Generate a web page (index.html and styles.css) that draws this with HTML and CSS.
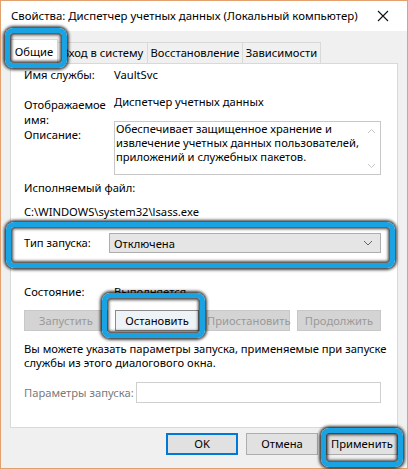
FILE: index.html
```html
<!DOCTYPE html>
<html lang="ru">
<head>
<meta charset="utf-8">
<link rel="stylesheet" href="styles.css">
</head>
<body>
<div class="window">
  <div class="titlebar">
    <span class="title">Свойства: Диспетчер учетных данных (Локальный компьютер)</span>
    <svg class="close" width="12" height="12" viewBox="0 0 12 12"><path d="M1 1L11 11M11 1L1 11" stroke="#111" stroke-width="1.1" fill="none"/></svg>
  </div>
  <div class="body">
    <div class="tabs">
      <div class="tab active">Общие</div>
      <div class="tab t2">Вход в систему</div>
      <div class="tab t3">Восстановление</div>
      <div class="tab t4">Зависимости</div>
    </div>
    <div class="panel">
      <div class="row r1"><div class="label">Имя службы:</div><div class="value">VaultSvc</div></div>
      <div class="row r2"><div class="label two">Отображаемое<br>имя:</div><div class="value">Диспетчер учетных данных</div></div>
      <div class="row r3">
        <div class="label pad6">Описание:</div>
        <div class="textarea">
          <div class="ta-text">Обеспечивает защищенное хранение и<br>извлечение учетных данных пользователей,<br>приложений и служебных пакетов.</div>
          <div class="ta-scroll">
            <svg width="9" height="6" viewBox="0 0 9 6"><path d="M1 5L4.5 1.5L8 5" stroke="#c4c4c4" stroke-width="1" fill="none"/></svg>
            <svg width="9" height="6" viewBox="0 0 9 6"><path d="M1 1L4.5 4.5L8 1" stroke="#c4c4c4" stroke-width="1" fill="none"/></svg>
          </div>
        </div>
      </div>
      <div class="row r4"><div class="label wide">Исполняемый файл:</div></div>
      <div class="row r5"><div class="label wide">C:\WINDOWS\system32\lsass.exe</div></div>
      <div class="row r6">
        <div class="label lh20">Тип запуска:</div>
        <div class="combo"><span>Отключена</span>
          <svg width="10" height="6" viewBox="0 0 10 6"><path d="M1 1L5 5L9 1" stroke="#666" stroke-width="1" fill="none"/></svg>
        </div>
      </div>
      <div class="row r7"><div class="label">Состояние:</div><div class="value">Выполняется</div></div>
      <div class="row r8 btnrow">
        <div class="btn disabled">Запустить</div>
        <div class="btn focus">Остановить</div>
        <div class="btn disabled">Приостановить</div>
        <div class="btn disabled">Продолжить</div>
      </div>
      <div class="row r9 note">Вы можете указать параметры запуска, применяемые при запуске<br>службы из этого диалогового окна.</div>
      <div class="row r10">
        <div class="label lh21 muted plabel">Параметры запуска:</div>
        <div class="input"></div>
      </div>
    </div>
    <div class="footer">
      <div class="btn fbtn default">OK</div>
      <div class="btn fbtn">Отмена</div>
      <div class="btn fbtn">Применить</div>
    </div>
  </div>
  <div class="hl hl-tab"></div>
  <div class="hl hl-type"></div>
  <div class="hl hl-stop"></div>
  <div class="hl hl-apply"></div>
</div>
</body>
</html>
```
FILE: styles.css
```css
* { box-sizing: border-box; }
html, body { margin: 0; padding: 0; }
body {
  width: 408px;
  height: 469px;
  overflow: hidden;
  font-family: "Noto Sans", "Liberation Sans", sans-serif;
  font-size: 11.2px;
  color: #000;
  background: #fff;
}
.window {
  position: relative;
  width: 408px;
  height: 469px;
  border: 1px solid #e3a06f;
  background: #f0f0f0;
  display: flex;
  flex-direction: column;
}
.titlebar {
  height: 30px;
  background: #fff;
  display: flex;
  align-items: center;
  justify-content: space-between;
  padding: 0 18px 0 10px;
}
.title { font-size: 11.4px; line-height: 30px; white-space: nowrap; }
.close { display: block; }
.body {
  flex: 1;
  padding: 0 9px;
  display: flex;
  flex-direction: column;
}
.tabs {
  height: 32px;
  display: flex;
  align-items: flex-end;
  position: relative;
  z-index: 2;
}
.tab {
  height: 21px;
  line-height: 19px;
  border: 1px solid #d9d9d9;
  border-bottom: none;
  background: #f0f0f0;
  text-align: center;
  white-space: nowrap;
  margin-left: -1px;
}
.tab.active {
  height: 25px;
  line-height: 24px;
  width: 48px;
  background: #fff;
  margin-left: 0;
  margin-bottom: -1px;
  padding-bottom: 1px;
}
.t2 { width: 91px; }
.t3 { width: 96px; }
.t4 { width: 79px; }
.panel {
  height: 365px;
  background: #fff;
  border: 1px solid #d9d9d9;
  padding: 0 0 0 13px;
  position: relative;
  z-index: 1;
}
.row { display: flex; }
.label { width: 90px; flex: none; line-height: 16px; white-space: nowrap; }
.label.wide { width: auto; }
.value { line-height: 16px; white-space: nowrap; }
.r1 { margin-top: 3px; height: 16px; }
.r2 { margin-top: 11px; height: 32px; }
.label.two { line-height: 15px; padding-top: 3px; }
.r3 { height: 54px; margin-top: -5px; }
.label.pad6 { padding-top: 6px; line-height: 15px; }
.textarea {
  width: 267px;
  height: 54px;
  border: 1px solid #c8c8c8;
  display: flex;
  justify-content: space-between;
}
.ta-text { line-height: 14px; padding: 0 0 0 1px; white-space: nowrap; }
.ta-scroll {
  width: 17px;
  display: flex;
  flex-direction: column;
  justify-content: space-between;
  align-items: center;
  padding: 6px 0 5px;
}
.ta-scroll svg { display: block; }
.r4 { margin-top: 5px; height: 16px; }
.r5 { margin-top: 8px; height: 16px; }
.r6 { margin-top: 13px; height: 20px; }
.lh20 { line-height: 20px; }
.combo {
  width: 272px;
  margin-left: -5px;
  height: 20px;
  background: #e5e5e5;
  border: 1px solid #adadad;
  display: flex;
  align-items: center;
  justify-content: space-between;
  padding: 0 7px 0 4px;
}
.combo svg { display: block; }
.r7 { margin-top: 31px; height: 16px; }
.btnrow { margin-top: 10px; gap: 7px; }
.btn {
  width: 84px;
  height: 21px;
  line-height: 19px;
  text-align: center;
  border: 1px solid #adadad;
  background: #e1e1e1;
  white-space: nowrap;
}
.btn.disabled {
  background: #d4d4d4;
  border-color: #c8c8c8;
  color: #9a9a9a;
}
.btn.focus { background: #eef3f7; border-color: #8a8a8a; }
.note { margin-top: 11px; line-height: 14px; display: block; white-space: nowrap; }
.r10 { margin-top: 12px; height: 21px; }
.lh21 { line-height: 21px; }
.plabel { width: 112px; }
.muted { color: #7a7a7a; }
.input {
  width: 245px;
  height: 21px;
  border: 1px solid #cfcfcf;
  background: #fff;
}
.footer {
  display: flex;
  justify-content: flex-end;
  gap: 8px;
  padding-top: 5px;
}
.fbtn { width: 72px; height: 22px; line-height: 20px; }
.fbtn.default { border: 2px solid #0078d7; line-height: 18px; }
.hl {
  position: absolute;
  border: 5px solid #1aa3e3;
  border-radius: 8px;
  box-shadow: 0 0 3px 2px rgba(0,0,0,0.75), inset 0 0 3px 2px rgba(0,0,0,0.7);
  z-index: 5;
}
.hl-tab { left: 4px; top: 27px; width: 62px; height: 40px; }
.hl-type { left: 5px; top: 221px; width: 389px; height: 46px; }
.hl-stop { left: 101px; top: 292px; width: 103px; height: 45px; }
.hl-apply { left: 320px; top: 427px; width: 82px; height: 39px; }
```
